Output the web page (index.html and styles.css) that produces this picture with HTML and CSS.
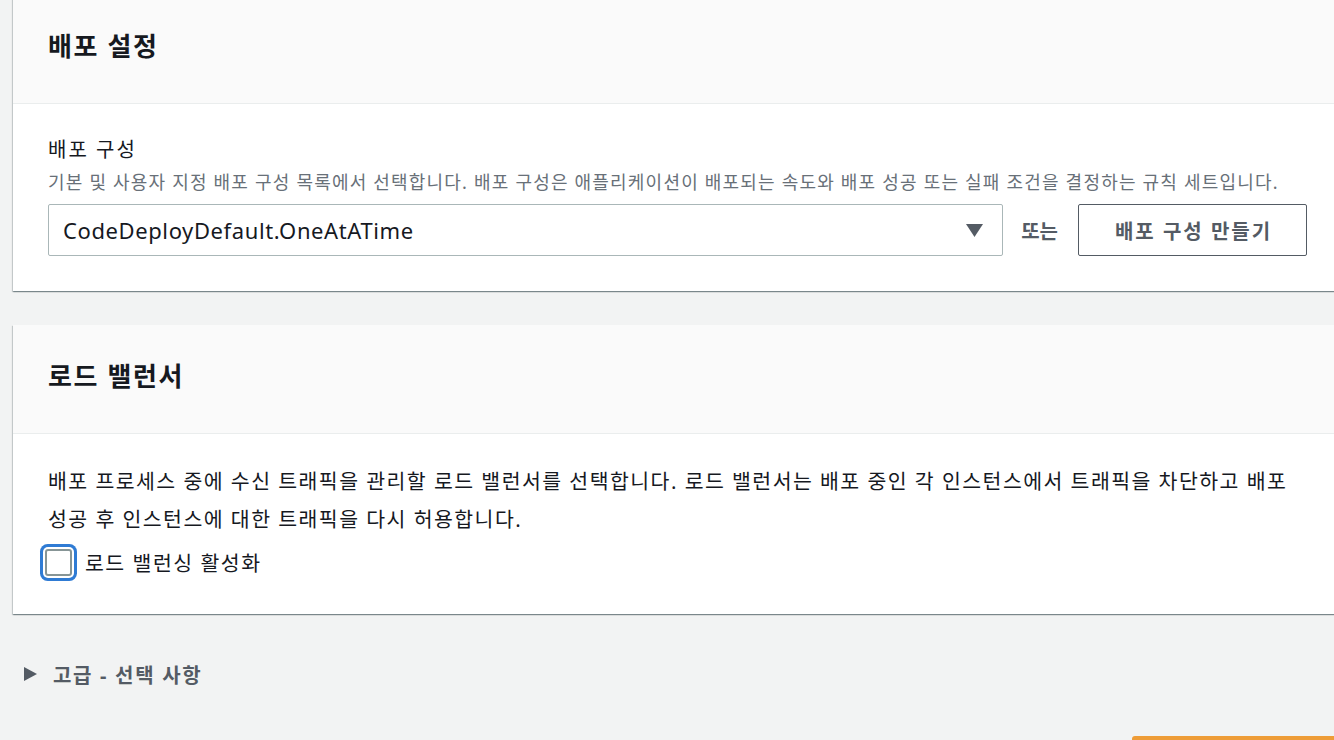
FILE: index.html
```html
<!DOCTYPE html>
<html lang="ko">
<head>
<meta charset="utf-8">
<title>배포 설정</title>
<link rel="stylesheet" href="styles.css">
</head>
<body>
<main class="page">
  <section class="card card-first">
    <header class="card-header"><h2>배포 설정</h2></header>
    <div class="card-body">
      <div class="field-label">배포 구성</div>
      <div class="field-desc">기본 및 사용자 지정 배포 구성 목록에서 선택합니다. 배포 구성은 애플리케이션이 배포되는 속도와 배포 성공 또는 실패 조건을 결정하는 규칙 세트입니다.</div>
      <div class="field-row">
        <div class="select">
          <span class="select-value">CodeDeployDefault.OneAtATime</span>
          <svg class="caret" width="17" height="13" viewBox="0 0 17 13"><polygon points="0,0 17,0 8.5,13" fill="#545b64"/></svg>
        </div>
        <span class="or">또는</span>
        <button class="btn">배포 구성 만들기</button>
      </div>
    </div>
  </section>

  <section class="card">
    <header class="card-header"><h2>로드 밸런서</h2></header>
    <div class="card-body card-body-lb">
      <p class="lb-text">배포 프로세스 중에 수신 트래픽을 관리할 로드 밸런서를 선택합니다. 로드 밸런서는 배포 중인 각 인스턴스에서 트래픽을 차단하고 배포 성공 후 인스턴스에 대한 트래픽을 다시 허용합니다.</p>
      <label class="check-row">
        <span class="checkbox"></span>
        <span class="check-label">로드 밸런싱 활성화</span>
      </label>
    </div>
  </section>

  <div class="expander">
    <svg class="expander-icon" width="13" height="14" viewBox="0 0 13 14"><polygon points="0,0 13,7 0,14" fill="#545b64"/></svg>
    <span class="expander-text">고급 - 선택 사항</span>
  </div>

  <div class="footer">
    <span class="btn-primary"></span>
  </div>
</main>
</body>
</html>
```

FILE: styles.css
```css
html, body {
  margin: 0;
  padding: 0;
  overflow: hidden;
  background: #f2f3f3;
}
body {
  font-family: "Noto Sans", "Noto Sans CJK KR", sans-serif;
  color: #16191f;
}
.page {
  padding-left: 13px;
  margin-right: -8px;
}
.card {
  background: #fff;
  box-shadow: 0 1px 1px 0 rgba(0, 28, 36, 0.3), 1px 1px 1px 0 rgba(0, 28, 36, 0.15), -1px 1px 1px 0 rgba(0, 28, 36, 0.15);
  margin-bottom: 34px;
}
.card-first {
  margin-top: -5px;
}
.card-header {
  height: 108px;
  background: #fafafa;
  border-bottom: 1px solid #eaeded;
  display: flex;
  align-items: center;
  padding: 0 35px;
}
.card-header h2 {
  margin: 0;
  font-size: 26px;
  letter-spacing: 1.6px;
  font-weight: 700;
  line-height: 32px;
  color: #16191f;
  padding-bottom: 6px;
}
.card-body {
  padding: 32px 35px 35px;
}
.field-label {
  font-size: 20px;
  letter-spacing: 2px;
  line-height: 28px;
  color: #16191f;
}
.field-desc {
  font-size: 18px;
  letter-spacing: 1.2px;
  line-height: 24px;
  color: #687078;
  margin-top: 6px;
  white-space: nowrap;
}
.field-row {
  display: flex;
  align-items: center;
  margin-top: 10px;
}
.select {
  flex: 1;
  height: 50px;
  border: 1px solid #aab7b8;
  border-radius: 2px;
  display: flex;
  align-items: center;
  justify-content: space-between;
  padding: 0 19px 0 14px;
  box-sizing: content-box;
}
.select-value {
  font-size: 22px;
  letter-spacing: 0.6px;
  color: #16191f;
}
.caret {
  display: block;
}
.or {
  font-size: 20px;
  font-weight: 700;
  color: #545b64;
  margin: 0 20px 0 18px;
}
.btn {
  width: 229px;
  height: 52px;
  background: #fff;
  border: 1px solid #545b64;
  border-radius: 2px;
  font-family: inherit;
  font-size: 20px;
  letter-spacing: 2px;
  font-weight: 700;
  color: #545b64;
  padding: 0 0 0 2px;
}
.card-body-lb {
  padding: 28px 35px 33px;
}
.lb-text {
  margin: 0;
  font-size: 20.5px;
  letter-spacing: 1.45px;
  line-height: 38px;
  word-break: keep-all;
  color: #16191f;
}
.check-row {
  display: flex;
  align-items: center;
  height: 38px;
  margin-top: 5px;
}
.checkbox {
  width: 23px;
  height: 23px;
  border: 2px solid #879596;
  border-radius: 3px;
  background: #fff;
  margin-left: -3px;
  box-shadow: 0 0 0 2px #fff, 0 0 0 5px #2f7bd4;
  flex-shrink: 0;
}
.check-label {
  font-size: 20.5px;
  letter-spacing: 1.5px;
  margin-left: 13px;
  color: #16191f;
}
.expander {
  display: flex;
  align-items: center;
  height: 30px;
  margin-top: 45px;
  padding-left: 11px;
}
.expander-icon {
  display: block;
}
.expander-text {
  font-size: 20px;
  letter-spacing: 1.7px;
  font-weight: 700;
  color: #545b64;
  margin-left: 16px;
}
.footer {
  display: flex;
  justify-content: flex-end;
  margin-top: 47px;
}
.btn-primary {
  display: block;
  width: 240px;
  height: 40px;
  background: #ee9c37;
  border-radius: 3px;
  margin-right: -30px;
}
```
